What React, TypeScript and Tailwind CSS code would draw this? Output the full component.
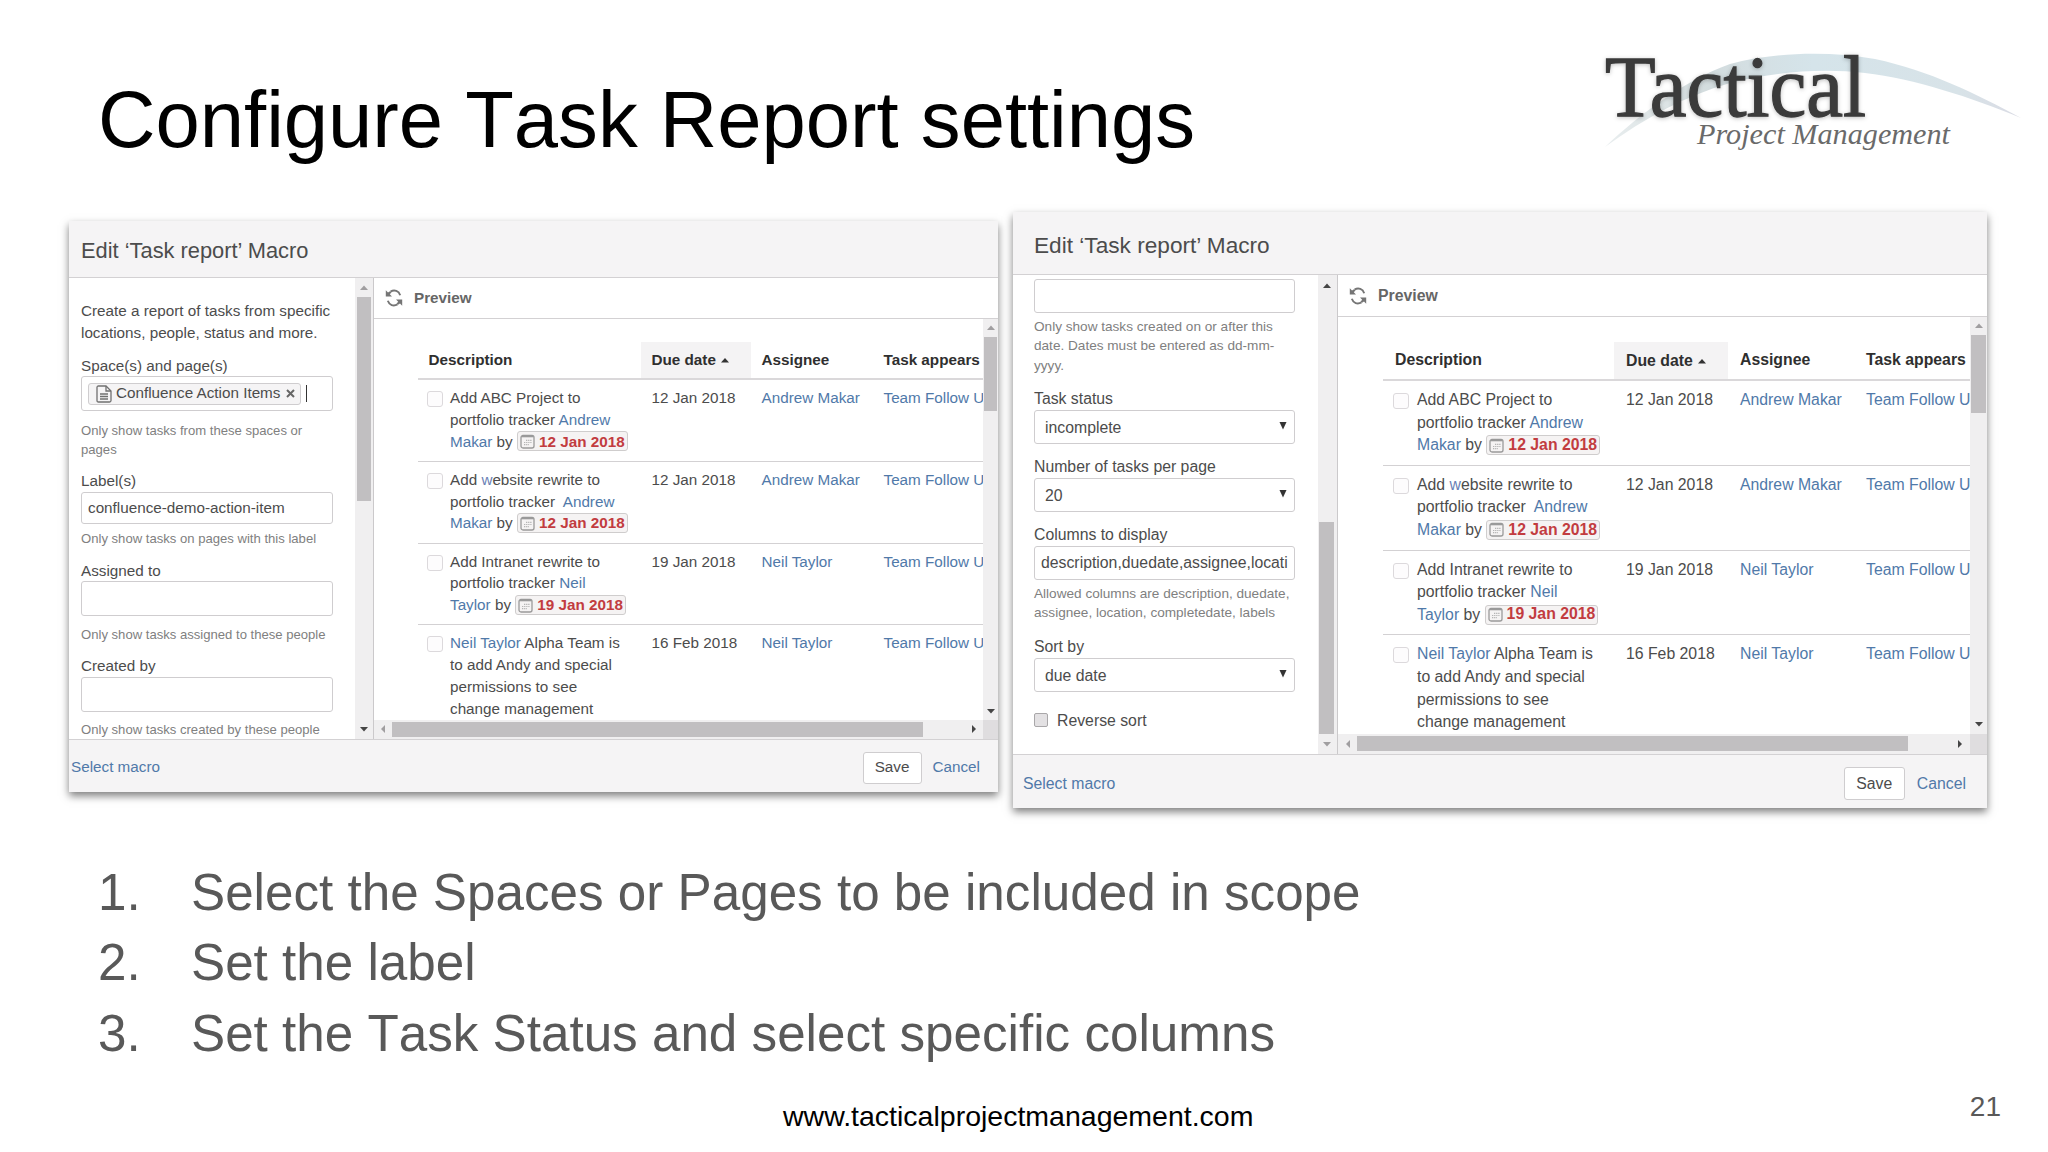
import type { ReactNode } from 'react';
import clsx from 'clsx';

type Size = 'sm' | 'lg';

interface Task {
  lines: ReactNode[];
  due: string;
  assignee: string;
}

const Link = ({ children }: { children: ReactNode }) => <span className="text-[#5079a9]">{children}</span>;

function CalendarIcon() {
  return (
    <svg width="15" height="15" viewBox="0 0 15 15" fill="none" className="shrink-0">
      <rect x="1" y="1.5" width="13" height="12.5" rx="2" stroke="#9a9a9a" strokeWidth="1.3" />
      <path d="M1.5 2.6h12" stroke="#9a9a9a" strokeWidth="1.4" />
      <path d="M6 6.4h5.5M4 8.5h7.5M4 10.6h5" stroke="#b4b4b4" strokeWidth="1.2" strokeDasharray="1.3 0.8" />
    </svg>
  );
}

function DateChip({ children }: { children: ReactNode }) {
  return (
    <span className="relative -top-px inline-flex h-5 items-center gap-[4px] rounded-[3px] border border-[#cfcdcd] bg-[#f5f3f3] px-[2px] align-middle font-bold text-[#c23c40]">
      <CalendarIcon />
      <span>{children}</span>
    </span>
  );
}

const tasks: Task[] = [
  {
    lines: [
      'Add ABC Project to',
      <>portfolio tracker <Link>Andrew</Link></>,
      <><Link>Makar</Link> by <DateChip>12 Jan 2018</DateChip></>,
    ],
    due: '12 Jan 2018',
    assignee: 'Andrew Makar',
  },
  {
    lines: [
      <>Add <span className="text-[#6a7fb5]">w</span>ebsite rewrite to</>,
      <>portfolio tracker&nbsp; <Link>Andrew</Link></>,
      <><Link>Makar</Link> by <DateChip>12 Jan 2018</DateChip></>,
    ],
    due: '12 Jan 2018',
    assignee: 'Andrew Makar',
  },
  {
    lines: [
      'Add Intranet rewrite to',
      <>portfolio tracker <Link>Neil</Link></>,
      <><Link>Taylor</Link> by <DateChip>19 Jan 2018</DateChip></>,
    ],
    due: '19 Jan 2018',
    assignee: 'Neil Taylor',
  },
  {
    lines: [
      <><Link>Neil Taylor</Link> Alpha Team is</>,
      'to add Andy and special',
      'permissions to see',
      'change management',
    ],
    due: '16 Feb 2018',
    assignee: 'Neil Taylor',
  },
];

const arrowPaths = {
  up: 'M0 6 L4 1.5 L8 6Z',
  down: 'M0 2 L8 2 L4 6.5Z',
  left: 'M6 0 L6 8 L2 4Z',
  right: 'M2 0 L6 4 L2 8Z',
};

function Arrow({ dir, dim }: { dir: keyof typeof arrowPaths; dim?: boolean }) {
  return (
    <svg width="8" height="8" viewBox="0 0 8 8" className="shrink-0">
      <path d={arrowPaths[dir]} fill={dim ? '#a09ea0' : '#454545'} />
    </svg>
  );
}

function RefreshIcon() {
  return (
    <svg width="18" height="18" viewBox="0 0 18 18" fill="none" className="shrink-0">
      <path d="M5.5 2.6C9.5 0.4 13.8 1.9 15.2 6.2" stroke="#757575" strokeWidth="1.9" />
      <path d="M12.5 15.4C8.5 17.6 4.2 16.1 2.8 11.8" stroke="#757575" strokeWidth="1.9" />
      <path d="M0.8 1.2V7.4H7L4.8 5.2L6.4 3.6L5 2.2L3 3.4Z" fill="#757575" />
      <path d="M17.2 16.8V10.6H11L13.2 12.8L11.6 14.4L13 15.8L15 14.6Z" fill="#757575" />
    </svg>
  );
}

function TaskTable({ size }: { size: Size }) {
  const lg = size === 'lg';
  const cols = lg
    ? 'grid grid-cols-[231px_114px_126px_200px]'
    : 'grid grid-cols-[223px_110px_122px_200px]';
  const cell = lg ? 'pl-3' : 'pl-[10.5px]';

  return (
    <div className={clsx('min-w-0 flex-1 overflow-hidden whitespace-nowrap', lg ? 'pt-[25px] pl-[45px]' : 'pt-[23px] pl-[44px]')}>
      <div className={clsx(cols, 'border-b-2 border-[#dad8da] font-bold text-[#2f2f2f]', lg ? 'h-[39px] leading-[36px]' : 'h-[38px] leading-[36px]')}>
        <div className={cell}>Description</div>
        <div className={clsx(cell, 'flex items-center gap-[5px] bg-[#f4f3f4]')}>
          Due date
          <svg width="8" height="6" viewBox="0 0 8 6">
            <path d="M0 5.5L4 1L8 5.5Z" fill="#333" />
          </svg>
        </div>
        <div className={cell}>Assignee</div>
        <div className={cell}>Task appears</div>
      </div>
      {tasks.map((task, i) => (
        <div
          key={i}
          className={clsx(
            cols,
            'border-b border-[#d3d1d3] last:border-b-0',
            lg ? 'h-[84.8px] pt-[8px] leading-[22.6px]' : 'h-[81.8px] pt-[7px] leading-[21.75px]',
          )}
        >
          <div className={clsx('flex', lg ? 'gap-2 pl-[10px]' : 'gap-[7.5px] pl-[9px]')}>
            <span className={clsx('mt-1 shrink-0 rounded-[3px] border border-[#dcd9dc] bg-[#fdfcfd]', lg ? 'size-4' : 'h-4 w-[15.5px]')} />
            <div>
              {task.lines.map((line, n) => (
                <div key={n} className={lg ? 'h-[22.6px]' : 'h-[21.75px]'}>{line}</div>
              ))}
            </div>
          </div>
          <div className={cell}>{task.due}</div>
          <div className={cell}><Link>{task.assignee}</Link></div>
          <div className={cell}><Link>Team Follow U</Link></div>
        </div>
      ))}
    </div>
  );
}

function Preview({ size }: { size: Size }) {
  const lg = size === 'lg';
  return (
    <div className="flex min-w-0 flex-1 flex-col">
      <div className={clsx('flex shrink-0 items-center gap-[11px] border-b border-[#d3d1d3] pl-[11px] font-bold text-[#666]', lg ? 'h-[42px] pt-px' : 'h-[41px]')}>
        <RefreshIcon />
        Preview
      </div>
      <div className="flex min-h-0 flex-1">
        <TaskTable size={size} />
        <div className={clsx('flex flex-col items-center bg-[#f0eff0]', lg ? 'w-[17px] pb-[6px]' : 'w-[15px] pb-[5px]')}>
          <div className="flex h-[18px] items-center"><Arrow dir="up" dim /></div>
          <div className={clsx('bg-[#c1bfc1]', lg ? 'h-[78px] w-[15px]' : 'h-[74px] w-[13px]')} />
          <div className="flex-1" />
          <Arrow dir="down" />
        </div>
      </div>
      <div className={clsx('flex shrink-0 bg-[#f0eff0]', lg ? 'h-5' : 'h-[19px]')}>
        <div className="flex flex-1 items-center pb-px">
          <div className={clsx('flex justify-center', lg ? 'w-[19px]' : 'w-[18px]')}><Arrow dir="left" dim /></div>
          <div className={clsx('h-[15px] bg-[#c1bfc1]', lg ? 'w-[551px]' : 'w-[531px]')} />
          <div className={clsx('flex flex-1 justify-end', lg ? 'pr-[6px]' : 'pr-[5px]')}><Arrow dir="right" /></div>
        </div>
        <div className={clsx('bg-[#dfdddf]', lg ? 'w-[17px]' : 'w-[15px]')} />
      </div>
    </div>
  );
}

function Field({ className, children }: { className?: string; children?: ReactNode }) {
  return (
    <div className={clsx('flex shrink-0 items-center rounded-[3px] border border-[#cfcdcf] bg-white whitespace-nowrap', className)}>
      {children}
    </div>
  );
}

function SelectField({ value }: { value: string }) {
  return (
    <Field className="h-[34px] justify-between pt-[2px] pr-[7px] pl-[10px]">
      {value}
      <svg width="8" height="9" viewBox="0 0 8 9" className="mb-1">
        <path d="M0.5 1H7.5L4 8.5Z" fill="#333" />
      </svg>
    </Field>
  );
}

function SpaceForm() {
  const label = 'h-5 shrink-0 leading-5';
  const help = 'shrink-0 text-[13.1px] leading-[19px] text-[#808080]';
  return (
    <div className="flex w-[286px] flex-col overflow-hidden pt-[22px] pr-[22px] pl-[12px] whitespace-nowrap">
      <p className="shrink-0 leading-[22px]">Create a report of tasks from specific<br />locations, people, status and more.</p>
      <div className={clsx(label, 'mt-3')}>Space(s) and page(s)</div>
      <Field className="h-[35px] pl-[6px]">
        <div className="flex h-[22px] items-center rounded-[3px] border border-[#cfcdcf] bg-[#f5f4f5] pr-[5px] pl-[7px]">
          <svg width="16" height="18" viewBox="0 0 16 18" fill="none" stroke="#707070" strokeWidth="1.3">
            <path d="M1 2.5Q1 1 2.5 1H10L15 6V15.5Q15 17 13.5 17H2.5Q1 17 1 15.5Z" />
            <path d="M10 1V6H15M4 9H12M4 11.5H12M4 14H12" />
          </svg>
          <span className="ml-[4px]">Confluence Action Items</span>
          <svg width="9" height="9" viewBox="0 0 9 9" className="ml-[6px]" stroke="#666" strokeWidth="2">
            <path d="M1 1L8 8M8 1L1 8" />
          </svg>
        </div>
        <span className="ml-[5px] h-[17px] w-px bg-[#333]" />
      </Field>
      <div className={clsx(help, 'mt-[10px]')}>Only show tasks from these spaces or<br />pages</div>
      <div className={clsx(label, 'mt-[12px] mb-px')}>Label(s)</div>
      <Field className="h-8 pl-[6px]">confluence-demo-action-item</Field>
      <div className={clsx(help, 'mt-[5px]')}>Only show tasks on pages with this label</div>
      <div className={clsx(label, 'mt-[13px]')}>Assigned to</div>
      <Field className="h-[35px]" />
      <div className={clsx(help, 'mt-[8.5px]')}>Only show tasks assigned to these people</div>
      <div className={clsx(label, 'mt-[12.5px] mb-px')}>Created by</div>
      <Field className="h-[35px]" />
      <div className={clsx(help, 'mt-[8px]')}>Only show tasks created by these people</div>
    </div>
  );
}

function StatusForm() {
  const label = 'h-[21px] shrink-0 leading-5';
  const help = 'shrink-0 text-[13.6px] leading-[19.5px] text-[#808080]';
  return (
    <div className="flex w-[305px] flex-col overflow-hidden pt-[4px] pr-[23px] pl-[21px] whitespace-nowrap">
      <Field className="h-[34px]" />
      <div className={clsx(help, 'mt-[3.5px]')}>
        Only show tasks created on or after this<br />date. Dates must be entered as dd-mm-<br />yyyy.
      </div>
      <div className={clsx(label, 'mt-[13.5px]')}>Task status</div>
      <SelectField value="incomplete" />
      <div className={clsx(label, 'mt-[13px]')}>Number of tasks per page</div>
      <SelectField value="20" />
      <div className={clsx(label, 'mt-[13px]')}>Columns to display</div>
      <Field className="h-[34px] pl-[6px]">description,duedate,assignee,locati</Field>
      <div className={clsx(help, 'mt-[4px]')}>
        Allowed columns are description, duedate,<br />assignee, location, completedate, labels
      </div>
      <div className={clsx(label, 'mt-[14px]')}>Sort by</div>
      <SelectField value="due date" />
      <div className="mt-[17px] flex items-center gap-[9px]">
        <span className="size-[14px] rounded-[2px] border border-[#a9a7a9] bg-[#e3e1e3]" />
        Reverse sort
      </div>
    </div>
  );
}

interface MacroDialogProps {
  size: Size;
  scroll: ReactNode;
  children: ReactNode;
}

function MacroDialog({ size, scroll, children }: MacroDialogProps) {
  const lg = size === 'lg';
  return (
    <section
      className={clsx(
        'flex flex-col bg-white text-[#4c4c4c] shadow-[0_4px_8px_rgba(0,0,0,0.5)]',
        lg ? 'mt-px h-[596px] w-[974px] text-[15.8px]' : 'mt-[10px] h-[571px] w-[929px] text-[15.25px]',
      )}
    >
      <div
        className={clsx(
          'flex shrink-0 items-center border-b border-[#d3d1d3] bg-[#f5f4f5]',
          lg ? 'h-[63px] pt-[6px] pl-[21px] text-[22.65px]' : 'h-[57px] pt-[4px] pl-[12px] text-[21.85px]',
        )}
      >
        Edit ‘Task report’ Macro
      </div>
      <div className="flex min-h-0 flex-1">
        {children}
        <div className={clsx('flex shrink-0 flex-col items-center border-r border-[#cbc9cb] bg-[#f0eff0]', lg ? 'w-[20px] pr-[2px]' : 'w-[19px]')}>
          {scroll}
        </div>
        <Preview size={size} />
      </div>
      <div
        className={clsx(
          'flex shrink-0 items-center border-t border-[#d3d1d3] bg-[#f5f4f5]',
          lg ? 'h-[54px] pt-[4px] pr-[21px] pl-[10px]' : 'h-[53px] pt-[3px] pr-[18px] pl-[2px]',
        )}
      >
        <Link>Select macro</Link>
        <button className={clsx('ml-auto rounded-[3px] border border-[#cfcdcf] bg-white', lg ? 'mr-[12px] h-[33px] w-[61px]' : 'mr-[11px] h-8 w-[59px]')}>
          Save
        </button>
        <Link>Cancel</Link>
      </div>
    </section>
  );
}

function Logo() {
  return (
    <svg width="468" height="140" viewBox="0 0 468 140" className="shrink-0">
      <defs>
        <linearGradient id="swoosh" x1="0" x2="1" y1="0" y2="0">
          <stop offset="0" stopColor="#e9eeef" />
          <stop offset="0.25" stopColor="#d3dcde" />
          <stop offset="0.5" stopColor="#d5e4ea" />
          <stop offset="0.85" stopColor="#d8e3e8" />
          <stop offset="1" stopColor="#dadbe4" />
        </linearGradient>
      </defs>
      <path
        d="M25 117C60 84 105 50 150 34C195 22 250 21 295 29C350 41 395 63 441 88C390 67 335 49 285 43C240 38 195 42 150 53C105 66 65 88 25 117Z"
        fill="url(#swoosh)"
      />
      <text
        x="25"
        y="86"
        fontSize="87"
        textLength="261"
        lengthAdjust="spacingAndGlyphs"
        fill="#3b3b3b"
        stroke="#3b3b3b"
        strokeWidth="1.3"
        className="font-['Liberation_Serif',serif] drop-shadow-[0_1px_2px_rgba(0,0,0,0.25)]"
      >
        Tactical
      </text>
      <text
        x="117"
        y="114"
        fontSize="30"
        textLength="253"
        lengthAdjust="spacingAndGlyphs"
        fill="#6a6a6a"
        className="font-['Liberation_Serif',serif] italic"
      >
        Project Management
      </text>
    </svg>
  );
}

const steps = [
  'Select the Spaces or Pages to be included in scope',
  'Set the label',
  'Set the Task Status and select specific columns',
];

export default function App() {
  return (
    <main className="flex h-[1152px] w-[2048px] flex-col overflow-hidden bg-white font-['Liberation_Sans',Arial,sans-serif]">
      <header className="flex h-[211px] shrink-0 items-start justify-between pt-[30px] pl-[98px]">
        <h1 className="pt-[44px] text-[79.6px] leading-[92px] text-black [font-kerning:none]">Configure Task Report settings</h1>
        <Logo />
      </header>

      <div className="flex shrink-0 items-start gap-[15px] pl-[69px]">
        <MacroDialog
          size="sm"
          scroll={
            <>
              <div className="flex h-[19px] items-center"><Arrow dir="up" dim /></div>
              <div className="h-[204px] w-[14px] bg-[#c1bfc1]" />
              <div className="mt-auto mb-[6px]"><Arrow dir="down" /></div>
            </>
          }
        >
          <SpaceForm />
        </MacroDialog>
        <MacroDialog
          size="lg"
          scroll={
            <>
              <div className="flex h-[21px] items-center"><Arrow dir="up" /></div>
              <div className="mt-auto h-[212px] w-[15px] bg-[#c1bfc1]" />
              <div className="flex h-5 items-center"><Arrow dir="down" dim /></div>
            </>
          }
        >
          <StatusForm />
        </MacroDialog>
      </div>

      <ol className="mt-[50px] shrink-0 pl-[98px] text-[51.2px] leading-[70.4px] text-[#595959] [font-kerning:none]">
        {steps.map((step, i) => (
          <li key={step} className="flex">
            <span className="w-[93px]">{i + 1}.</span>
            {step}
          </li>
        ))}
      </ol>

      <footer className="grid grid-cols-[783px_1fr_auto] pt-[19px] pr-[47px]">
        <span />
        <span className="pt-[12px] text-[28.5px] leading-8 text-black">www.tacticalprojectmanagement.com</span>
        <span className="pt-[3px] text-[28px] leading-8 text-[#595959]">21</span>
      </footer>
    </main>
  );
}
